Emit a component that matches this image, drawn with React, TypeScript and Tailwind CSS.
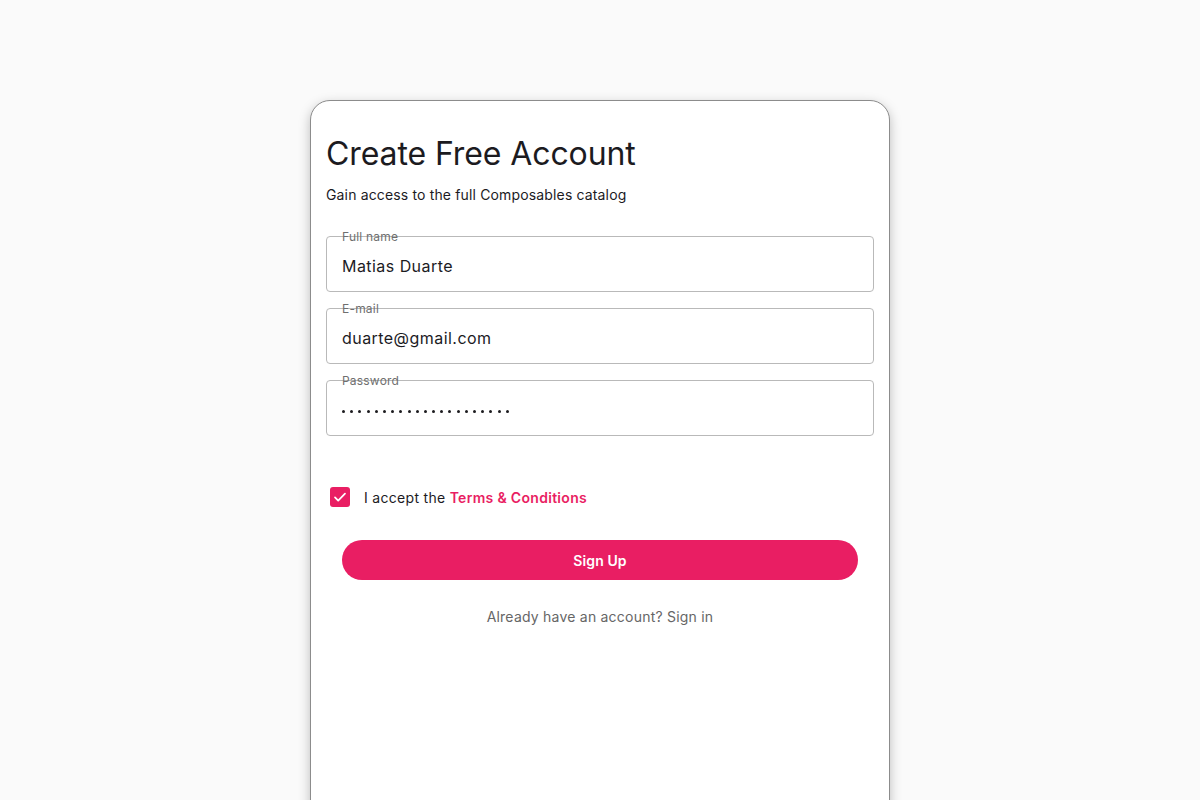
import React from "react";

function Field({ label, value, password }: { label: string; value: string; password?: boolean }) {
  return (
    <div className="relative h-[56px] rounded-[4px] border border-[#b9b9b9] flex items-center px-[15px]">
      <span className="absolute left-[15px] top-[-8px] text-[12px] leading-[16px] text-[#6f6f6f] tracking-[0.2px]">{label}</span>
      {password ? (
        <div className="flex gap-[5.2px] items-center pt-[6px]">
          {Array.from({ length: 21 }).map((_, i) => (
            <span key={i} className="block w-[3px] h-[3px] rounded-full bg-[#1c1b1f]" />
          ))}
        </div>
      ) : (
        <span className="pt-[4px] text-[16px] leading-[24px] text-[#1c1b1f] tracking-[0.45px]">{value}</span>
      )}
    </div>
  );
}

export default function App() {
  return (
    <div
      className="w-full h-[800px] overflow-hidden bg-[#fafafa] pt-[100px]"
      style={{ fontFamily: "Inter, 'Noto Sans', sans-serif" }}
    >
      <div className="mx-auto w-[580px] h-[760px] bg-white rounded-[20px] border border-[#8c8c8c] shadow-[0_4px_12px_rgba(0,0,0,0.25)] px-[15px] pt-[33px]">
        <h1 className="text-[32px] leading-[40px] text-[#1c1b1f] font-normal tracking-[-0.1px]">Create Free Account</h1>
        <p className="mt-[11px] text-[14px] leading-[20px] text-[#1c1b1f] tracking-[0.15px]">
          Gain access to the full Composables catalog
        </p>
        <div className="mt-[31px] flex flex-col gap-[16px]">
          <Field label="Full name" value="Matias Duarte" />
          <Field label="E-mail" value="duarte@gmail.com" />
          <Field label="Password" value="" password />
        </div>
        <div className="mt-[50px] flex items-center pl-[4px]">
          <div className="w-[20px] h-[20px] rounded-[3px] bg-[#e91e63] flex items-center justify-center">
            <svg width="16" height="16" viewBox="0 0 24 24" fill="none" stroke="white" strokeWidth="2.6" strokeLinecap="round" strokeLinejoin="round">
              <path d="M4.5 12.5l4.8 4.8L19.5 7" />
            </svg>
          </div>
          <span className="ml-[14px] pt-[2px] text-[14px] leading-[20px] text-[#1c1b1f] tracking-[0.3px]">
            I accept the <span className="text-[#e91e63] font-semibold tracking-[0.3px]">Terms &amp; Conditions</span>
          </span>
        </div>
        <div className="mt-[32px] px-[16px]">
          <button className="w-full h-[40px] rounded-full bg-[#e91e63] text-white text-[14px] font-semibold tracking-[0.1px]">
            Sign Up
          </button>
        </div>
        <p className="mt-[27px] text-center text-[14px] leading-[20px] text-[#666666] tracking-[0.22px]">
          Already have an account? Sign in
        </p>
      </div>
    </div>
  );
}
